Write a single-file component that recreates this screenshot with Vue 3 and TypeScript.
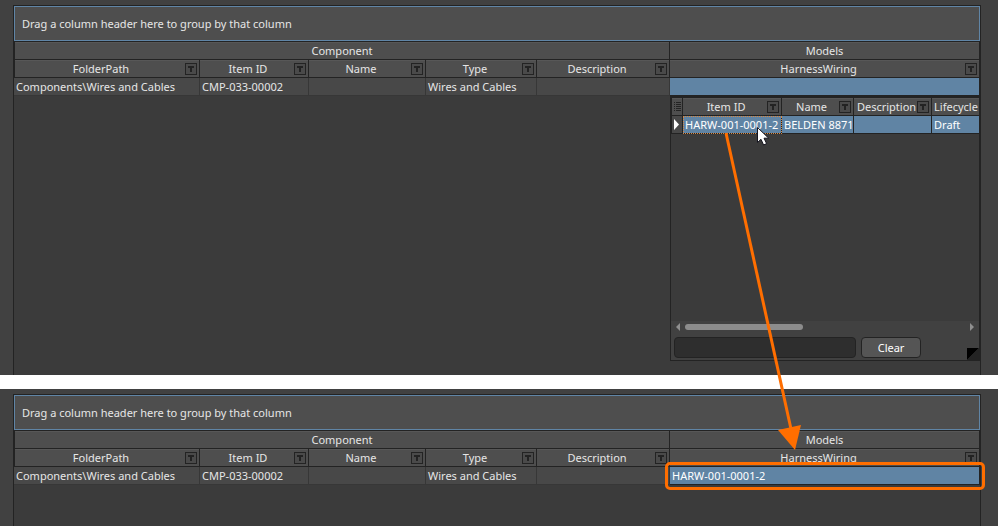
<script setup lang="ts">
interface Column {
  title: string
  value: string
}

interface Scene {
  id: string
  model: string
  picking: boolean
}

const columns: Column[] = [
  { title: 'FolderPath', value: 'Components\\Wires and Cables' },
  { title: 'Item ID', value: 'CMP-033-00002' },
  { title: 'Name', value: '' },
  { title: 'Type', value: 'Wires and Cables' },
  { title: 'Description', value: '' },
]

const pickerColumns: Column[] = [
  { title: 'Item ID', value: 'HARW-001-0001-2' },
  { title: 'Name', value: 'BELDEN 8871' },
  { title: 'Description', value: '' },
  { title: 'Lifecycle', value: 'Draft' },
]

const scenes: Scene[] = [
  { id: 'before', model: '', picking: true },
  { id: 'after', model: 'HARW-001-0001-2', picking: false },
]
</script>

<template>
  <main class="page">
    <section v-for="scene in scenes" :key="scene.id" class="scene" :class="scene.id">
      <div class="panel">
        <div class="group-box">Drag a column header here to group by that column</div>
        <table class="grid">
          <colgroup>
            <col class="c-folder" />
            <col class="c-item" />
            <col class="c-name" />
            <col class="c-type" />
            <col class="c-desc" />
            <col />
          </colgroup>
          <thead>
            <tr>
              <th colspan="5" scope="colgroup">Component</th>
              <th scope="colgroup">Models</th>
            </tr>
            <tr>
              <th v-for="col in columns" :key="col.title" scope="col">
                <div class="head">
                  <span class="title">{{ col.title }}</span>
                  <button class="filter" type="button" :aria-label="`Filter ${col.title}`">
                    <svg viewBox="0 0 10 10"><path d="M2 2h6v2H6v4H4V4H2z" /></svg>
                  </button>
                </div>
              </th>
              <th scope="col">
                <div class="head">
                  <span class="title">HarnessWiring</span>
                  <button class="filter" type="button" aria-label="Filter HarnessWiring">
                    <svg viewBox="0 0 10 10"><path d="M2 2h6v2H6v4H4V4H2z" /></svg>
                  </button>
                </div>
              </th>
            </tr>
          </thead>
          <tbody>
            <tr>
              <td v-for="col in columns" :key="col.title">{{ col.value }}</td>
              <td class="selected model">
                {{ scene.model }}
                <div v-if="scene.picking" class="picker">
                  <div class="picker-view">
                    <table class="grid picker-grid">
                      <colgroup>
                        <col class="p-mark" />
                        <col class="p-item" />
                        <col class="p-name" />
                        <col class="p-desc" />
                        <col class="p-life" />
                      </colgroup>
                      <thead>
                        <tr>
                          <th class="mark">
                            <svg viewBox="0 0 10 17">
                              <path d="M2 4.5h1M4 4.5h5M2 6.5h1M4 6.5h5M2 8.5h1M4 8.5h5M2 10.5h1M4 10.5h5M2 12.5h1M4 12.5h5" />
                            </svg>
                          </th>
                          <th v-for="col in pickerColumns" :key="col.title" scope="col">
                            <div class="head">
                              <span class="title">{{ col.title }}</span>
                              <button class="filter" type="button" :aria-label="`Filter ${col.title}`">
                                <svg viewBox="0 0 10 10"><path d="M2 2h6v2H6v4H4V4H2z" /></svg>
                              </button>
                            </div>
                          </th>
                        </tr>
                      </thead>
                      <tbody>
                        <tr>
                          <td class="mark">
                            <svg viewBox="0 0 10 17"><path class="current" d="M2 3v11l5-5.500z" /></svg>
                          </td>
                          <td
                            v-for="(col, i) in pickerColumns"
                            :key="col.title"
                            class="selected"
                            :class="{ focused: i === 0 }"
                          >{{ col.value }}</td>
                        </tr>
                      </tbody>
                    </table>
                  </div>
                  <div class="scrollbar">
                    <svg class="arrow" viewBox="0 0 4 8"><path d="M4 0v8L0 4z" /></svg>
                    <div class="track"><div class="thumb"></div></div>
                    <svg class="arrow" viewBox="0 0 4 8"><path d="M0 0v8l4-4z" /></svg>
                  </div>
                  <div class="picker-foot">
                    <input class="search" type="text" aria-label="Search models" />
                    <button class="clear" type="button">Clear</button>
                    <svg class="grip" viewBox="0 0 12 12">
                      <path d="M0 0h12L0 12z" fill="#000" /><path d="M12 0v12H0z" fill="#232323" />
                    </svg>
                  </div>
                </div>
                <div v-else class="highlight"></div>
              </td>
            </tr>
          </tbody>
        </table>
      </div>
    </section>

    <svg class="pointer" viewBox="0 0 90 330" aria-hidden="true">
      <path d="M6 13L71 309" stroke="#ff6e00" stroke-width="3" />
      <path d="M58 310L81 305L75 330z" fill="#ff6e00" />
      <path
        d="M37.500 7.500v15l3.500-3.200 2.600 5.700 3-1.400-2.600-5.400h4.700z"
        fill="#fff"
        stroke="#14141e"
        stroke-width="1"
      />
    </svg>
  </main>
</template>

<style>
body {
  margin: 0;
}
</style>

<style scoped>
.page {
  position: relative;
  display: flex;
  flex-direction: column;
  gap: 14px;
  min-height: 100vh;
  overflow: hidden;
  background: #fff;
  color: #e6e6e6;
  font: 11px/16px "Noto Sans", "Open Sans", sans-serif;
}

.scene {
  display: flex;
  box-sizing: border-box;
  padding: 5px 17px 0 13px;
  background: #414141;
}

.before {
  min-height: 375px;
}

.after {
  flex: 1;
}

.panel {
  flex: 1;
  min-width: 0;
  border: 1px solid #232323;
  border-bottom: 0;
  background: #3b3b3b;
}

.group-box {
  padding: 9px 7px 8px;
  border: 1px solid #6085a6;
  background: #4e4e4e;
}

.grid {
  width: 100%;
  table-layout: fixed;
  border-spacing: 0;
}

.panel > .grid {
  border-top: 1px solid #232323;
}

.c-folder { width: 186px; }
.c-item { width: 109px; }
.c-name { width: 117px; }
.c-type { width: 111px; }
.c-desc { width: 133px; }

.grid th,
.grid td {
  box-sizing: border-box;
  height: 18px;
  padding: 0;
  border-right: 1px solid #232323;
  border-bottom: 1px solid #232323;
  white-space: nowrap;
}

.grid th {
  background: #4e4e4e;
  box-shadow: inset 0 1px #575757;
  font-weight: normal;
  text-align: center;
}

.grid th:first-child {
  border-left: 1px solid #232323;
}

.grid td {
  padding-left: 2px;
  border-color: #373737;
  background: #484848;
  text-align: left;
}

.grid td.selected {
  border-color: #232323;
  background: #6084a4;
  color: #fff;
}

.head {
  display: flex;
  align-items: center;
  padding: 0 2px;
}

.title {
  flex: 1;
}

.filter {
  display: block;
  flex: none;
  width: 12px;
  height: 12px;
  padding: 0;
  border: 1px solid #232323;
  background: #4a4a4a;
}

.filter svg {
  display: block;
  width: 10px;
  height: 10px;
  fill: #232323;
}

.grid td.model {
  position: relative;
}

.picker {
  position: absolute;
  top: 100%;
  left: 0;
  right: -1px;
  display: flex;
  flex-direction: column;
  box-sizing: border-box;
  height: 265px;
  margin-top: 1px;
  border: 1px solid #232323;
  background: #414141;
  color: #e6e6e6;
}

.picker-view {
  flex: 1;
  overflow: hidden;
  border-top: 1px solid #232323;
  background: #3b3b3b;
}

.picker-grid {
  width: 340px;
}

.p-mark { width: 12px; }
.p-item { width: 99px; }
.p-name { width: 72px; }
.p-desc { width: 78px; }
.p-life { width: 79px; }

.picker-grid .mark {
  padding: 0;
  border-left: 1px solid #232323;
  border-color: #232323;
}

.mark svg {
  display: block;
  width: 10px;
  height: 17px;
  stroke: #232323;
}

.mark .current {
  fill: #fff;
  stroke: none;
}

.focused {
  outline: 1px dotted #d98840;
  outline-offset: -1px;
}

.picker-grid th:last-child .head {
  padding-right: 19px;
}

.picker-grid th:last-child .title {
  text-align: left;
}

.scrollbar {
  display: flex;
  align-items: center;
  gap: 5px;
  height: 12px;
  padding: 0 5px;
}

.arrow {
  width: 4px;
  height: 8px;
  fill: #909090;
}

.track {
  flex: 1;
}

.thumb {
  width: 118px;
  height: 6px;
  border-radius: 3px;
  background: #8c8c8c;
}

.picker-foot {
  display: flex;
  gap: 5px;
  padding: 4px 0 2px 3px;
}

.search {
  box-sizing: border-box;
  width: 182px;
  height: 21px;
  border: 1px solid #232323;
  border-radius: 4px;
  background: #2e2e2e;
  color: inherit;
  font: inherit;
}

.clear {
  box-sizing: border-box;
  width: 60px;
  height: 21px;
  padding: 0;
  border: 1px solid #232323;
  border-radius: 4px;
  background: #555;
  color: #fff;
  font: inherit;
}

.grip {
  align-self: flex-end;
  width: 12px;
  height: 12px;
  margin: 0 0 -2px auto;
}

.highlight {
  position: absolute;
  inset: -5px -6px -6px -5px;
  border: 3px solid #ff6e00;
  border-radius: 5px;
}

.pointer {
  position: absolute;
  top: 120px;
  left: 720px;
  width: 90px;
  height: 330px;
  pointer-events: none;
}
</style>
